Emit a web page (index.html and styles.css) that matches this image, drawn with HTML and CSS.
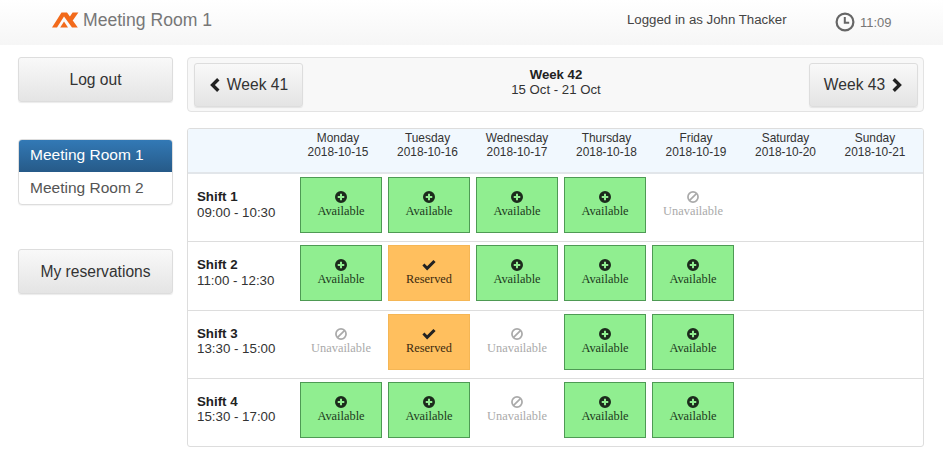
FILE: index.html
```html
<!DOCTYPE html>
<html lang="en">
<head>
<meta charset="utf-8">
<title>Meeting Room 1</title>
<link rel="stylesheet" href="styles.css">
</head>
<body>
<svg class="defs" width="0" height="0" aria-hidden="true">
  <symbol id="i-plus" viewBox="0 0 14 14"><path fill-rule="evenodd" d="M7 0a7 7 0 1 1 0 14A7 7 0 0 1 7 0zM5.8 3.2v2.6H3.2v2.4h2.6v2.6h2.4V8.2h2.6V5.8H8.2V3.2z"/></symbol>
  <symbol id="i-ban" viewBox="0 0 14 14"><circle cx="7" cy="7" r="5.9" fill="none" stroke="currentColor" stroke-width="2"/><path d="M3 11 11 3" stroke="currentColor" stroke-width="2"/></symbol>
  <symbol id="i-check" viewBox="0 0 15 12"><path d="M0.4 6.6 2.6 4.4 5.5 7.3 12.2 0.6 14.6 2.9 5.5 12z"/></symbol>
</svg>
<header class="topbar">
  <div class="brand">
    <svg class="logo" viewBox="0 0 27 16" width="27" height="16"><path fill="#f26a1b" d="M0 15.5 9.5.5H15L25.8 15.5H20L12 4.5 5 15.5zM17.6 5 20.6.5H26.4L20.6 8.8zM8.2 15.5 12 9.4 16 15.5z"/></svg>
    <span class="brand-name">Meeting Room 1</span>
  </div>
  <div class="user">Logged in as John Thacker</div>
  <div class="clock">
    <svg viewBox="0 0 20 20" width="20" height="20"><circle cx="10" cy="10" r="8.4" fill="none" stroke="#666" stroke-width="2.2"/><path d="M9.8 5v5.8h4.4" fill="none" stroke="#666" stroke-width="2"/></svg>
    <span>11:09</span>
  </div>
</header>
<div class="page">
  <aside class="side">
    <button class="btn btn-side">Log out</button>
    <nav class="rooms">
      <div class="room room-on">Meeting Room 1</div>
      <div class="room">Meeting Room 2</div>
    </nav>
    <button class="btn btn-side">My reservations</button>
  </aside>
  <main class="main">
    <section class="weeknav">
      <button class="btn btn-week"><svg class="chev" viewBox="0 0 10 14" width="11" height="14"><path d="M7.6 0 10 2.4 5.4 7 10 11.6 7.6 14 .6 7z"/></svg>Week 41</button>
      <div class="weektitle"><strong>Week 42</strong><span>15 Oct - 21 Oct</span></div>
      <button class="btn btn-week">Week 43<svg class="chev" viewBox="0 0 10 14" width="11" height="14"><path d="M2.4 0 0 2.4 4.6 7 0 11.6 2.4 14l7-7z"/></svg></button>
    </section>
    <section class="sched">
      <div class="hrow">
        <div class="hcell"></div>
        <div class="hcell">Monday<br>2018-10-15</div>
        <div class="hcell">Tuesday<br>2018-10-16</div>
        <div class="hcell">Wednesday<br>2018-10-17</div>
        <div class="hcell">Thursday<br>2018-10-18</div>
        <div class="hcell">Friday<br>2018-10-19</div>
        <div class="hcell">Saturday<br>2018-10-20</div>
        <div class="hcell">Sunday<br>2018-10-21</div>
      </div>
      <div class="row">
        <div class="shift"><strong>Shift 1</strong><span>09:00 - 10:30</span></div>
        <div class="slot av"><svg class="ic"><use href="#i-plus"/></svg>Available</div>
        <div class="slot av"><svg class="ic"><use href="#i-plus"/></svg>Available</div>
        <div class="slot av"><svg class="ic"><use href="#i-plus"/></svg>Available</div>
        <div class="slot av"><svg class="ic"><use href="#i-plus"/></svg>Available</div>
        <div class="slot un"><svg class="ic"><use href="#i-ban"/></svg>Unavailable</div>
      </div>
      <div class="row">
        <div class="shift"><strong>Shift 2</strong><span>11:00 - 12:30</span></div>
        <div class="slot av"><svg class="ic"><use href="#i-plus"/></svg>Available</div>
        <div class="slot re"><svg class="ic ic-check"><use href="#i-check"/></svg>Reserved</div>
        <div class="slot av"><svg class="ic"><use href="#i-plus"/></svg>Available</div>
        <div class="slot av"><svg class="ic"><use href="#i-plus"/></svg>Available</div>
        <div class="slot av"><svg class="ic"><use href="#i-plus"/></svg>Available</div>
      </div>
      <div class="row">
        <div class="shift"><strong>Shift 3</strong><span>13:30 - 15:00</span></div>
        <div class="slot un"><svg class="ic"><use href="#i-ban"/></svg>Unavailable</div>
        <div class="slot re"><svg class="ic ic-check"><use href="#i-check"/></svg>Reserved</div>
        <div class="slot un"><svg class="ic"><use href="#i-ban"/></svg>Unavailable</div>
        <div class="slot av"><svg class="ic"><use href="#i-plus"/></svg>Available</div>
        <div class="slot av"><svg class="ic"><use href="#i-plus"/></svg>Available</div>
      </div>
      <div class="row">
        <div class="shift"><strong>Shift 4</strong><span>15:30 - 17:00</span></div>
        <div class="slot av"><svg class="ic"><use href="#i-plus"/></svg>Available</div>
        <div class="slot av"><svg class="ic"><use href="#i-plus"/></svg>Available</div>
        <div class="slot un"><svg class="ic"><use href="#i-ban"/></svg>Unavailable</div>
        <div class="slot av"><svg class="ic"><use href="#i-plus"/></svg>Available</div>
        <div class="slot av"><svg class="ic"><use href="#i-plus"/></svg>Available</div>
      </div>
    </section>
  </main>
</div>
</body>
</html>
```

FILE: styles.css
```css
* { box-sizing: border-box; }
html, body { margin: 0; height: 100%; overflow: hidden; }
body {
  background: #fff;
  color: #333;
  font-family: "Liberation Sans", Arial, sans-serif;
  font-size: 13px;
}
.defs { position: absolute; }

.topbar {
  height: 45px;
  display: flex;
  align-items: center;
  background: linear-gradient(to bottom, #fff 0%, #f6f6f6 100%);
}
.brand { display: flex; align-items: center; margin-left: 52px; width: 575px; padding-bottom: 5px; }
.logo { margin-right: 4px; }
.brand-name { font-size: 17.6px; color: #777; }
.user { width: 208px; font-size: 13.25px; color: #444; padding-bottom: 6px; }
.clock { display: flex; align-items: center; gap: 5px; font-size: 13px; color: #777; padding-bottom: 1px; }

.page { display: flex; padding: 12px 19px 0 18px; gap: 14px; }

.side { width: 155px; flex: none; display: flex; flex-direction: column; }
.btn {
  display: block;
  border: 1px solid #ddd;
  border-radius: 3px;
  font-family: inherit;
  color: #333;
  background: linear-gradient(to bottom, #f9f9f9 0%, #e4e4e4 100%);
  box-shadow: 0 1px 1px rgba(0,0,0,.08);
  padding: 0;
}
.btn-side { width: 155px; height: 44.5px; padding-top: 1px; font-size: 15.6px; }
.rooms {
  margin: 37px 0 44px;
  height: 66.5px;
  border: 1px solid #ddd;
  border-radius: 4px;
  overflow: hidden;
  box-shadow: 0 1px 1px rgba(0,0,0,.05);
  background: #fff;
}
.room { height: 32.5px; line-height: 32px; padding-left: 11px; font-size: 15.5px; color: #555; }
.room-on {
  margin: -1px -1px 0;
  height: 33.5px;
  line-height: 32px;
  padding-left: 12px;
  color: #fff;
  background: linear-gradient(to bottom, #337ab7 0%, #265a88 100%);
}

.main { width: 737px; flex: none; }
.weeknav {
  height: 55px;
  display: flex;
  align-items: center;
  justify-content: space-between;
  padding: 1px 5px 0 6px;
  background: #f8f8f8;
  border: 1px solid #e3e3e3;
  border-radius: 4px;
}
.btn-week {
  width: 109px;
  height: 44px;
  font-size: 15.6px;
  display: flex;
  align-items: center;
  justify-content: center;
  gap: 7px;
}
.chev { fill: #222; }
.weektitle { display: flex; flex-direction: column; align-items: center; font-size: 13.2px; line-height: 15px; color: #333; margin-bottom: 6px; }
.weektitle strong { color: #222; }

.sched {
  margin-top: 16px;
  width: 737px;
  border: 1px solid #ddd;
  border-radius: 3px;
  overflow: hidden;
}
.hrow {
  display: grid;
  grid-template-columns: 105.25px repeat(7, 89.5px);
  height: 45px;
  background: #f1f8fe;
  border-bottom: 2px solid #e2e6ea;
}
.row {
  display: grid;
  grid-template-columns: 106px repeat(5, 82px);
  column-gap: 6px;
  height: 68.25px;
  padding-top: 3px;
  border-bottom: 1px solid #ddd;
  align-items: start;
}
.row:last-child { border-bottom: 0; height: 67.5px; }
.hcell { font-size: 11.9px; line-height: 14px; text-align: center; padding-top: 2px; color: #333; }
.shift { display: flex; flex-direction: column; padding: 12px 0 0 9px; font-size: 13.3px; line-height: 15.5px; }
.shift strong { color: #222; }
.slot {
  height: 56px;
  display: flex;
  flex-direction: column;
  align-items: center;
  padding-top: 13px;
  font-family: "Liberation Serif", "Times New Roman", serif;
  font-size: 12.4px;
  line-height: 14px;
  border: 1px solid transparent;
}
.ic { width: 12px; height: 12px; margin-bottom: 1px; }
.ic-check { width: 14px; height: 12px; }
.av { background: #90ee90; border-color: #4e9a54; color: #1d3a1d; }
.av .ic { fill: #1c2a1c; }
.re { background: #ffbf5e; border-color: #f5b655; color: #3a2a10; }
.re .ic { fill: #222; }
.un { color: #aaa; }
.un .ic { color: #aaa; }
```
